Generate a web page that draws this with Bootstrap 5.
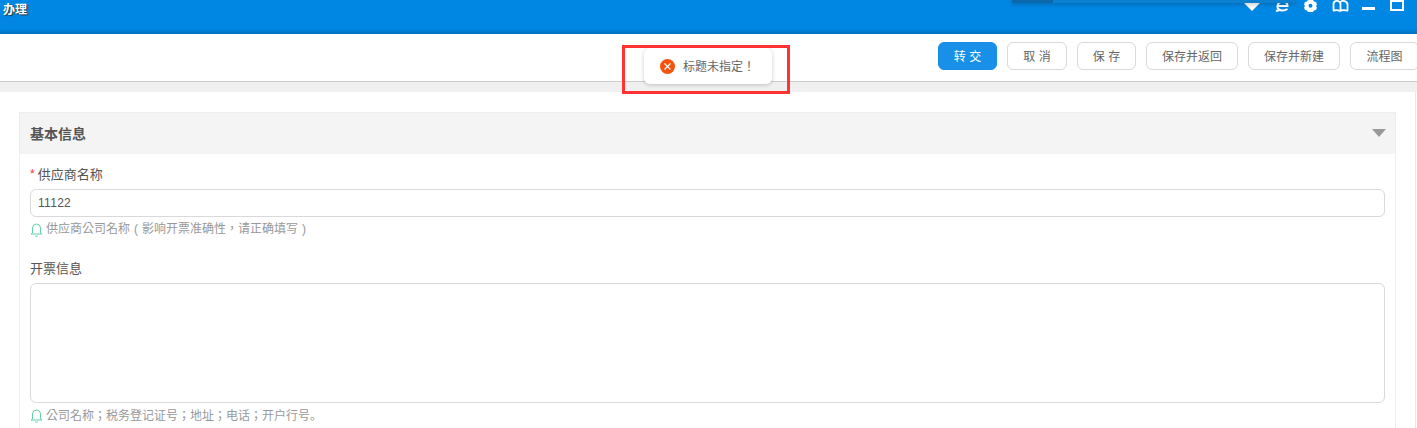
<!DOCTYPE html>
<html lang="zh">
<head>
    <meta charset="UTF-8">
    <title>办理</title>
    <link href="https://cdn.jsdelivr.net/npm/bootstrap@5.3.0/dist/css/bootstrap.min.css" rel="stylesheet">
    <style>
        html, body { height: 428px; overflow: hidden; }
        body { font-family: "Liberation Sans", "Noto Sans CJK SC", sans-serif; font-size: 12px; color: #666; background: #fff; }
        .top-bar { height: 34px; background: linear-gradient(to bottom, #0087e3 0, #0087e3 29px, #0070bd 34px); color: #fff; padding-right: 13px; }
        .top-title { font-family: "Liberation Serif", "Noto Sans CJK SC", serif; font-weight: 700; font-size: 12px; line-height: 21px; margin-left: 3px; text-shadow: 1px 1px 1px #333; }
        .top-icons { gap: 15px; height: 13px; }
        .top-icons svg { display: block; flex: none; }
        .icon-drop { margin-top: 3px; }
        .icon-min { margin-left: -2px; }
        .drop-panel { position: absolute; left: 1012px; top: 0; width: 283px; height: 3px; background: #0d7fcf; box-shadow: 0 1px 4px rgba(0,0,0,.3); }
        .drop-panel::before { content: ""; display: block; width: 41px; height: 3px; background: #0a68aa; }
        .tool-bar { height: 48px; border-bottom: 1px solid #ccc; padding: 8px 0 0; gap: 10px; overflow: hidden; }
        .tool-btn { height: 28px; padding: 1px 0 0; font-size: 12px; line-height: 26px; color: #666; background: #fff; border: 1px solid #d9d9d9; border-radius: 6px; white-space: nowrap; flex: none; }
        .tool-btn.main { width: 59px; background: #1890e8; border-color: #1890e8; color: #fff; }
        .w-two { width: 60px; }
        .w-two-b { width: 59px; }
        .w-five { width: 92px; }
        .w-flow { width: 69px; margin-right: -2px; }
        .grey-strip { height: 10px; background: #f0f0f0; }
        .page-body { padding: 20px 21px 0 19px; }
        .info-box { border: 1px solid #eee; border-bottom: 0; height: 316px; overflow: hidden; }
        .info-head { height: 41px; background: #f4f4f4; padding: 0 10px; }
        .info-head strong { font-size: 14px; color: #555; padding-top: 1px; }
        .arrow-down { width: 0; height: 0; border-left: 7.500px solid transparent; border-right: 7.500px solid transparent; border-top: 8px solid #999; margin-right: -1px; margin-top: -2px; }
        .info-form { padding: 10px 10px 0; }
        .field-label { font-size: 13px; line-height: 20px; height: 21px; color: #555; padding-top: 1px; margin-bottom: 4px; display: block; }
        .field-label i { color: #f33; font-style: normal; font-size: 12px; line-height: 1; vertical-align: 1px; margin-right: 3px; }
        .field-input { height: 28px; border: 1px solid #d9d9d9; border-radius: 6px; font-size: 12px; color: #555; padding: 0 7px; box-shadow: none; letter-spacing: .3px; }
        .field-area { height: 120px; border: 1px solid #d9d9d9; border-radius: 6px; box-shadow: none; resize: none; }
        .field-hint { color: #999; font-family: "Liberation Sans", "Noto Sans CJK TC", sans-serif; font-size: 12px; line-height: 18px; margin-top: 3px; gap: 3px; }
        .cn-stop { font-family: "Noto Sans CJK SC", sans-serif; }
        .cn-mark { display: inline-block; width: 12px; text-align: center; }
        .gap-field { margin-bottom: 20px; }
        .toast-box { position: absolute; left: 644px; top: 48px; width: 128px; height: 36px; background: #fff; border-radius: 6px; box-shadow: 0 1px 4px rgba(0,0,0,.2); gap: 8px; padding-left: 16px; color: #666; font-family: "Liberation Sans", "Noto Sans CJK TC", sans-serif; font-size: 12px; z-index: 5; }
        .toast-text { padding-top: 1px; white-space: nowrap; }
        .red-frame { position: absolute; left: 622px; top: 45px; width: 168px; height: 49px; border: 3px solid #f33; z-index: 6; }
        .side-line { position: absolute; left: 1415px; top: 92px; width: 1px; height: 336px; background: #e8e8e8; }
    </style>
</head>
<body>

<div class="top-bar d-flex justify-content-between align-items-start">
    <div class="top-title">办理</div>
    <div class="top-icons d-flex align-items-start">
        <svg class="icon-drop" width="16" height="8" viewBox="0 0 16 8"><path d="M0 0h16L8 8z" fill="#fff"/></svg>
        <svg width="14" height="12" viewBox="0 0 14 12"><path d="M2.500 6h10C12.500 3 10.500 1.500 8 1.500S3 3 2.500 6c-.5 3 2.500 4.500 5 4.500 2 0 3.500-.5 5-1.500M1 10.500c1 .5 2 .5 3.500-.5" fill="none" stroke="#fff" stroke-width="2"/></svg>
        <svg width="13" height="12" viewBox="0 0 13 12"><path d="M4 0h5l1 1.500 2 .5 1 2.500-1 1.500 1 1.500-1 2.500-2 .5-1 1.500H4l-1-1.500-2-.5L0 7.500 1 6 0 4.500 1 2l2-.5zM6.500 3.800a2 2 0 1 0 0 4 2 2 0 0 0 0-4z" fill="#fff" fill-rule="evenodd"/></svg>
        <svg width="17" height="12" viewBox="0 0 17 12"><path d="M1.500 11V4c0-4 6-4 6.500-1 .5-3 6.500-3 7.500 1v7M8.500 3v8M1 11c2-1 5-1 7 0 2-1 5-1 8 0" fill="none" stroke="#fff" stroke-width="1.800"/></svg>
        <svg class="icon-min" width="13" height="11" viewBox="0 0 13 11"><rect y="7" width="13" height="3" fill="#fff"/></svg>
        <svg width="14" height="11" viewBox="0 0 14 11"><rect x="1" y="1" width="12" height="9" fill="none" stroke="#fff" stroke-width="2"/></svg>
    </div>
</div>
<div class="drop-panel"></div>

<div class="tool-bar d-flex justify-content-end">
    <button class="btn tool-btn main">转 交</button>
    <button class="btn tool-btn w-two">取 消</button>
    <button class="btn tool-btn w-two-b">保 存</button>
    <button class="btn tool-btn w-five">保存并返回</button>
    <button class="btn tool-btn w-five">保存并新建</button>
    <button class="btn tool-btn w-flow">流程图</button>
</div>
<div class="grey-strip"></div>

<div class="page-body">
    <div class="info-box">
        <div class="info-head d-flex justify-content-between align-items-center">
            <strong>基本信息</strong>
            <span class="arrow-down"></span>
        </div>
        <div class="info-form">
            <div class="gap-field">
                <label class="field-label"><i>*</i>供应商名称</label>
                <input class="form-control field-input" type="text" value="11122">
                <div class="field-hint d-flex align-items-center" lang="zh-Hant">
                    <svg width="13" height="15" viewBox="0 0 13 15"><path d="M2.500 11V6a4 4 0 0 1 8 0v5l1.500 1H1zM5 13.500a1.800 1.800 0 0 0 3 0" fill="none" stroke="#5fd3a8" stroke-width="1"/></svg>
                    <span>供应商公司名称<span class="cn-mark">(</span>影响开票准确性，请正确填写<span class="cn-mark">)</span></span>
                </div>
            </div>
            <div>
                <label class="field-label">开票信息</label>
                <textarea class="form-control field-area"></textarea>
                <div class="field-hint d-flex align-items-center" lang="zh-Hant">
                    <svg width="13" height="15" viewBox="0 0 13 15"><path d="M2.500 11V6a4 4 0 0 1 8 0v5l1.500 1H1zM5 13.500a1.800 1.800 0 0 0 3 0" fill="none" stroke="#5fd3a8" stroke-width="1"/></svg>
                    <span>公司名称；税务登记证号；地址；电话；开户行号<span class="cn-stop" lang="zh-Hans">。</span></span>
                </div>
            </div>
        </div>
    </div>
</div>
<div class="side-line"></div>

<div class="toast-box d-flex align-items-center" lang="zh-Hant">
    <svg width="15" height="15" viewBox="0 0 15 15" class="flex-shrink-0"><circle cx="7.500" cy="7.500" r="7.500" fill="#f4520d"/><path d="M4.500 4.500l6 6M10.500 4.500l-6 6" stroke="#fff" stroke-width="1.200" fill="none"/></svg>
    <span class="toast-text">标题未指定！</span>
</div>
<div class="red-frame"></div>

<script src="https://cdn.jsdelivr.net/npm/bootstrap@5.3.0/dist/js/bootstrap.bundle.min.js"></script>
</body>
</html>
